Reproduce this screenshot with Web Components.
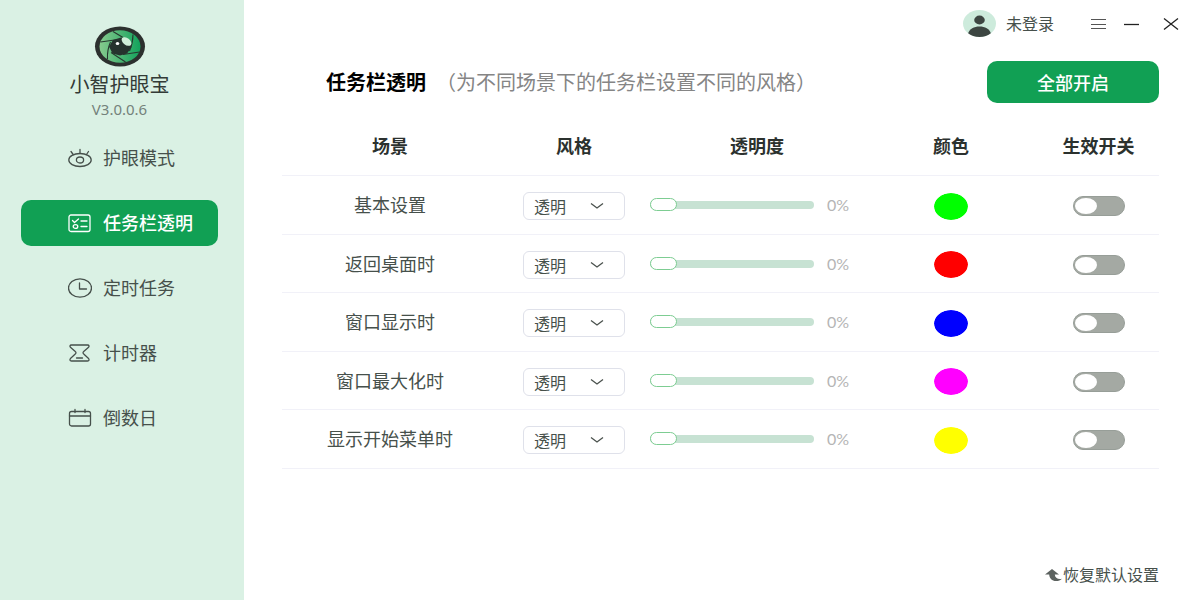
<!DOCTYPE html>
<html lang="zh-CN">
<head>
<meta charset="utf-8">
<meta name="viewport" content="width=device-width, initial-scale=1">
<title>小智护眼宝</title>
<style>
  html { height: 100%; }
  body {
    margin: 0;
    min-height: 100%;
    display: flex;
    background: #fff;
    color: #3f4743;
    font-family: "Noto Sans", "Noto Sans CJK SC", sans-serif;
    --green: #11a054;
    --mint: #daf1e4;
    --line: #f1f1f8;
  }
</style>
</head>
<body>
<app-sidebar>
  <app-brand slot="brand" version="V3.0.0.6">小智护眼宝</app-brand>
  <nav-item icon="eye">护眼模式</nav-item>
  <nav-item icon="list" active>任务栏透明</nav-item>
  <nav-item icon="clock">定时任务</nav-item>
  <nav-item icon="timer">计时器</nav-item>
  <nav-item icon="calendar">倒数日</nav-item>
</app-sidebar>
<app-main>
  <window-bar slot="bar">未登录</window-bar>
  <page-header slot="header" action="全部开启">任务栏透明<span slot="note">（为不同场景下的任务栏设置不同的风格）</span></page-header>
  <scene-table></scene-table>
  <reset-link slot="footer">恢复默认设置</reset-link>
</app-main>

<script>
const define = (name, html, setup) => {
  const template = document.createElement('template');
  template.innerHTML = html;
  customElements.define(name, class extends HTMLElement {
    constructor() {
      super();
      this.attachShadow({ mode: 'open' }).append(template.content.cloneNode(true));
    }
    connectedCallback() {
      if (setup) setup(this, this.shadowRoot);
    }
  });
};

define('app-sidebar', `
  <style>
    :host { display: flex; flex-direction: column; flex: none; width: 244px; box-sizing: border-box; padding: 26px 26px 26px 21px; background: var(--mint); }
    nav { display: flex; flex-direction: column; gap: 19px; margin-top: 17px; }
  </style>
  <slot name="brand"></slot>
  <nav><slot></slot></nav>`);

define('app-brand', `
  <style>
    :host { display: flex; flex-direction: column; align-items: center; }
    svg { display: block; width: 52px; height: 42px; }
    .name { font-size: 20px; line-height: 30px; margin-top: 2px; color: #333b37; }
    .version { font-size: 15px; line-height: 18px; color: #74827b; }
  </style>
  <svg viewBox="0 0 52 42" aria-hidden="true">
    <defs>
      <linearGradient id="g" x1="0" x2="1" y1="0" y2="0">
        <stop offset="0" stop-color="#86cb8e"/><stop offset=".5" stop-color="#4db574"/><stop offset="1" stop-color="#12a35c"/>
      </linearGradient>
    </defs>
    <ellipse cx="26" cy="20.500" rx="25" ry="20" fill="#2c302e"/>
    <ellipse cx="26" cy="20.500" rx="20.500" ry="16.200" fill="url(#g)"/>
    <path fill="none" stroke="#26382f" stroke-width="1.100" d="M19 5.500 29 11.500M6.500 16 24 13.500M13.500 33Q13 24 16.500 16M31.500 36 17 26.500M45.500 26 29 28.500M39 8.500Q39 17 35.500 25"/>
    <path fill="#26332e" d="M19 14 27 11.500 35 14 37.500 21 33 27.500 26 29.500 18.500 27.500 15 20.500z"/>
    <ellipse cx="32.500" cy="15.500" rx="5.600" ry="3.400" fill="#d0efd9" transform="rotate(38 32.500 15.500)"/>
    <ellipse cx="23.500" cy="17.500" rx="1.800" ry="1.500" fill="#fff"/>
  </svg>
  <div class="name"><slot></slot></div>
  <div class="version"></div>`,
  (host, root) => { root.querySelector('.version').textContent = host.getAttribute('version'); });

const navIcons = {
  eye: '<ellipse cx="12" cy="12" rx="11.200" ry="6.500"/><ellipse cx="12" cy="12" rx="3.600" ry="3"/><path d="M3 3.500 5.200 6.500M12 1.500v4M20.500 3.500 18.500 6.500"/>',
  list: '<rect x="1" y="2" width="21" height="16.500" rx="2"/><path d="M4.500 7.500 6.500 9.500 10.500 6M13 8h6M13 13.500h6"/><ellipse cx="7.500" cy="13.500" rx="2.300" ry="1.900"/>',
  clock: '<ellipse cx="12" cy="10" rx="11.500" ry="9.200"/><path d="M11.500 5v6h7"/>',
  timer: '<path d="M3.500 2h16c1.800 0 2 1.600.8 2.600L16 8.200c-1.300 1.100-1.300 2 0 3.100l4.300 4c1.200 1.100 1 2.700-.8 2.700h-16c-1.800 0-2-1.600-.8-2.700l4.300-4c1.300-1.100 1.300-2 0-3.100L2.700 4.600C1.500 3.600 1.700 2 3.500 2zM8.500 15h6"/>',
  calendar: '<rect x="1.500" y="3.500" width="21" height="14.500" rx="2"/><path d="M1.500 8h21M7 1.500v3M17 1.500v3"/>'
};
define('nav-item', `
  <style>
    :host { display: block; }
    a { display: flex; align-items: center; gap: 11px; height: 46px; padding-left: 47px; border-radius: 10px; color: #46504b; font-size: 18px; line-height: 24px; text-decoration: none; white-space: nowrap; }
    svg { flex: none; width: 24px; height: 20px; fill: none; stroke: currentColor; stroke-width: 1.300; stroke-linecap: round; stroke-linejoin: round; }
    :host([active]) a { background: var(--green); color: #fff; font-weight: 500; }
  </style>
  <a href="#"><svg viewBox="0 0 24 20" aria-hidden="true"></svg><span><slot></slot></span></a>`,
  (host, root) => {
    root.querySelector('svg').innerHTML = navIcons[host.getAttribute('icon')];
    if (host.hasAttribute('active')) root.querySelector('a').setAttribute('aria-current', 'page');
  });

define('app-main', `
  <style>
    :host { display: flex; flex-direction: column; flex: 1; min-width: 0; }
    main { flex: 1; padding: 13px 41px 0 38px; }
    footer { display: flex; justify-content: flex-end; padding: 0 41px 13px 38px; }
  </style>
  <slot name="bar"></slot>
  <main><slot name="header"></slot><slot></slot></main>
  <footer><slot name="footer"></slot></footer>`);

define('window-bar', `
  <style>
    :host { display: flex; align-items: center; justify-content: flex-end; height: 48px; padding-right: 20px; }
    a { display: flex; align-items: center; gap: 10px; margin-right: 36px; color: #46504b; font-size: 16px; line-height: 24px; text-decoration: none; }
    svg { display: block; }
    .tools { display: flex; gap: 15px; }
    .tools > :last-child { margin-left: 6px; }
    button { padding: 0; border: 0; background: none; color: #222; }
    button svg { width: 18px; height: 16px; fill: none; stroke: currentColor; stroke-width: 1.300; }
    .menu { color: #555; }
  </style>
  <a href="#">
    <svg width="33" height="28" viewBox="0 0 33 28" aria-hidden="true">
      <clipPath id="c"><ellipse cx="16.500" cy="13.500" rx="16.500" ry="13.500"/></clipPath>
      <g clip-path="url(#c)">
        <path fill="#cdebdc" d="M0 0h33v28H0z"/>
        <ellipse cx="16.500" cy="10" rx="5.300" ry="4.400" fill="#3d4642"/>
        <path fill="#3d4642" d="M5 23.500c1.500-4.500 6-7 11.500-7S26.500 19 28 23.500v4H5z"/>
      </g>
    </svg>
    <span><slot></slot></span>
  </a>
  <div class="tools">
    <button type="button" class="menu" aria-label="菜单"><svg viewBox="0 0 18 16"><path stroke-width="1" d="M1 3.500h15M1 8.500h15M1 12.500h15"/></svg></button>
    <button type="button" aria-label="最小化"><svg viewBox="0 0 18 16"><path d="M1 8.500h15"/></svg></button>
    <button type="button" aria-label="关闭"><svg viewBox="0 0 18 16"><path d="M2 2.500l14 11M16 2.500l-14 11"/></svg></button>
  </div>`);

define('page-header', `
  <style>
    :host { display: flex; align-items: center; justify-content: space-between; padding-left: 44px; }
    .text { display: flex; align-items: center; padding-top: 2px; font-size: 20px; line-height: 30px; white-space: nowrap; }
    h1 { margin: 0 10px 0 0; font-size: 20px; font-weight: 700; color: #000; }
    .note { color: #858585; }
    button { width: 172px; height: 42px; padding: 0; border: 0; border-radius: 10px; background: var(--green); color: #fff; font: 500 18px/24px "Noto Sans CJK SC", sans-serif; }
  </style>
  <div class="text"><h1><slot></slot></h1><span class="note"><slot name="note"></slot></span></div>
  <button type="button"></button>`,
  (host, root) => { root.querySelector('button').textContent = host.getAttribute('action'); });

define('style-select', `
  <style>
    :host { display: inline-grid; width: 102px; height: 28px; margin-top: 2px; vertical-align: middle; }
    select, svg { grid-area: 1 / 1; }
    select { appearance: none; box-sizing: border-box; width: 100%; height: 100%; padding: 0 0 0 10px; border: 1px solid #dfe1ea; border-radius: 6px; background: #fff; color: #46504b; font: 16px/24px "Noto Sans CJK SC", sans-serif; }
    svg { justify-self: end; align-self: center; width: 14px; height: 8px; margin-right: 21px; fill: none; stroke: #4b524e; stroke-width: 1.300; pointer-events: none; }
  </style>
  <select><option>透明</option><option>模糊</option><option>亚克力</option></select>
  <svg viewBox="0 0 14 8" aria-hidden="true"><path d="M1 1.500 7 6 13 1.500"/></svg>`,
  (host, root) => root.querySelector('select').setAttribute('aria-label', host.getAttribute('label')));

define('opacity-slider', `
  <style>
    :host { display: flex; align-items: center; gap: 13px; }
    input { appearance: none; width: 164px; height: 14px; margin: 0; background: none; }
    input::-webkit-slider-runnable-track { height: 8px; border-radius: 4px; background: #c7e2d3; }
    input::-webkit-slider-thumb { appearance: none; box-sizing: border-box; width: 27px; height: 13px; margin-top: -3px; border: 1px solid #7dcd92; border-radius: 8px; background: #fff; }
    output { font: 16px/20px Lato, sans-serif; color: #b5b5b5; }
  </style>
  <input type="range" min="0" max="100" value="0"><output>0%</output>`,
  (host, root) => {
    const input = root.querySelector('input');
    input.setAttribute('aria-label', host.getAttribute('label'));
    input.addEventListener('input', () => { root.querySelector('output').textContent = input.value + '%'; });
  });

define('color-swatch', `
  <style>
    :host { display: inline-block; margin-top: 2px; vertical-align: middle; }
    input { appearance: none; display: block; width: 34px; height: 27px; padding: 0; border: 0; border-radius: 50%; overflow: hidden; background: none; }
    input::-webkit-color-swatch-wrapper { padding: 0; }
    input::-webkit-color-swatch { border: 0; border-radius: 50%; }
  </style>
  <input type="color">`,
  (host, root) => {
    const input = root.querySelector('input');
    input.value = host.getAttribute('value');
    input.setAttribute('aria-label', host.getAttribute('label'));
  });

define('toggle-switch', `
  <style>
    :host { display: flex; justify-content: center; padding-top: 2px; }
    input { appearance: none; display: flex; align-items: center; box-sizing: border-box; width: 52px; height: 20px; margin: 0; padding: 0 1px; border: 1px solid #979e98; border-radius: 10px; background: #a4a9a3; }
    input::before { content: ""; width: 22px; height: 16px; border-radius: 50%; background: #fff; }
    input:checked { justify-content: flex-end; border-color: var(--green); background: var(--green); }
  </style>
  <input type="checkbox" role="switch">`,
  (host, root) => root.querySelector('input').setAttribute('aria-label', host.getAttribute('label')));

const scenes = [
  ['基本设置', '#00ff00'],
  ['返回桌面时', '#ff0000'],
  ['窗口显示时', '#0000ff'],
  ['窗口最大化时', '#ff00ff'],
  ['显示开始菜单时', '#ffff00']
];
define('scene-table', `
  <style>
    :host { display: block; margin-top: 15px; }
    table { width: 100%; table-layout: fixed; border-spacing: 0; font-size: 18px; line-height: 24px; text-align: center; }
    .scene { width: 216px; } .style { width: 152px; } .opacity { width: 214px; } .color { width: 174px; } .switch { width: 121px; }
    th, td { box-sizing: border-box; height: 59px; padding: 0; border-bottom: 1px solid var(--line); }
    thead th { height: 58px; padding-bottom: 2px; font-weight: 700; color: #2b312e; }
    tbody th { font-weight: 400; }
    tbody tr:nth-child(even) > * { height: 58px; }
    tbody tr { color: #46504b; }
  </style>
  <table>
    <colgroup><col class="scene"><col class="style"><col class="opacity"><col class="color"><col class="switch"></colgroup>
    <thead><tr><th scope="col">场景</th><th scope="col">风格</th><th scope="col">透明度</th><th scope="col">颜色</th><th scope="col">生效开关</th></tr></thead>
    <tbody></tbody>
  </table>`,
  (host, root) => {
    root.querySelector('tbody').innerHTML = scenes.map(([name, color]) => `
      <tr>
        <th scope="row">${name}</th>
        <td><style-select label="${name} 风格"></style-select></td>
        <td><opacity-slider label="${name} 透明度"></opacity-slider></td>
        <td><color-swatch value="${color}" label="${name} 颜色"></color-swatch></td>
        <td><toggle-switch label="${name} 生效开关"></toggle-switch></td>
      </tr>`).join('');
  });

define('reset-link', `
  <style>
    :host { display: block; }
    a { display: flex; align-items: center; gap: 1px; color: #46504b; font-size: 16px; line-height: 24px; text-decoration: none; }
    svg { display: block; width: 17px; height: 14px; }
  </style>
  <a href="#">
    <svg viewBox="0 0 17 14" aria-hidden="true"><path fill="#5c625f" d="M7 1 0 6.500h4.200C4.500 10.500 7 13 11 13c2.500 0 4.500-.8 6-2.300-4 .8-7-.7-7.200-4.200H14z"/></svg>
    <span><slot></slot></span>
  </a>`);
</script>
</body>
</html>
